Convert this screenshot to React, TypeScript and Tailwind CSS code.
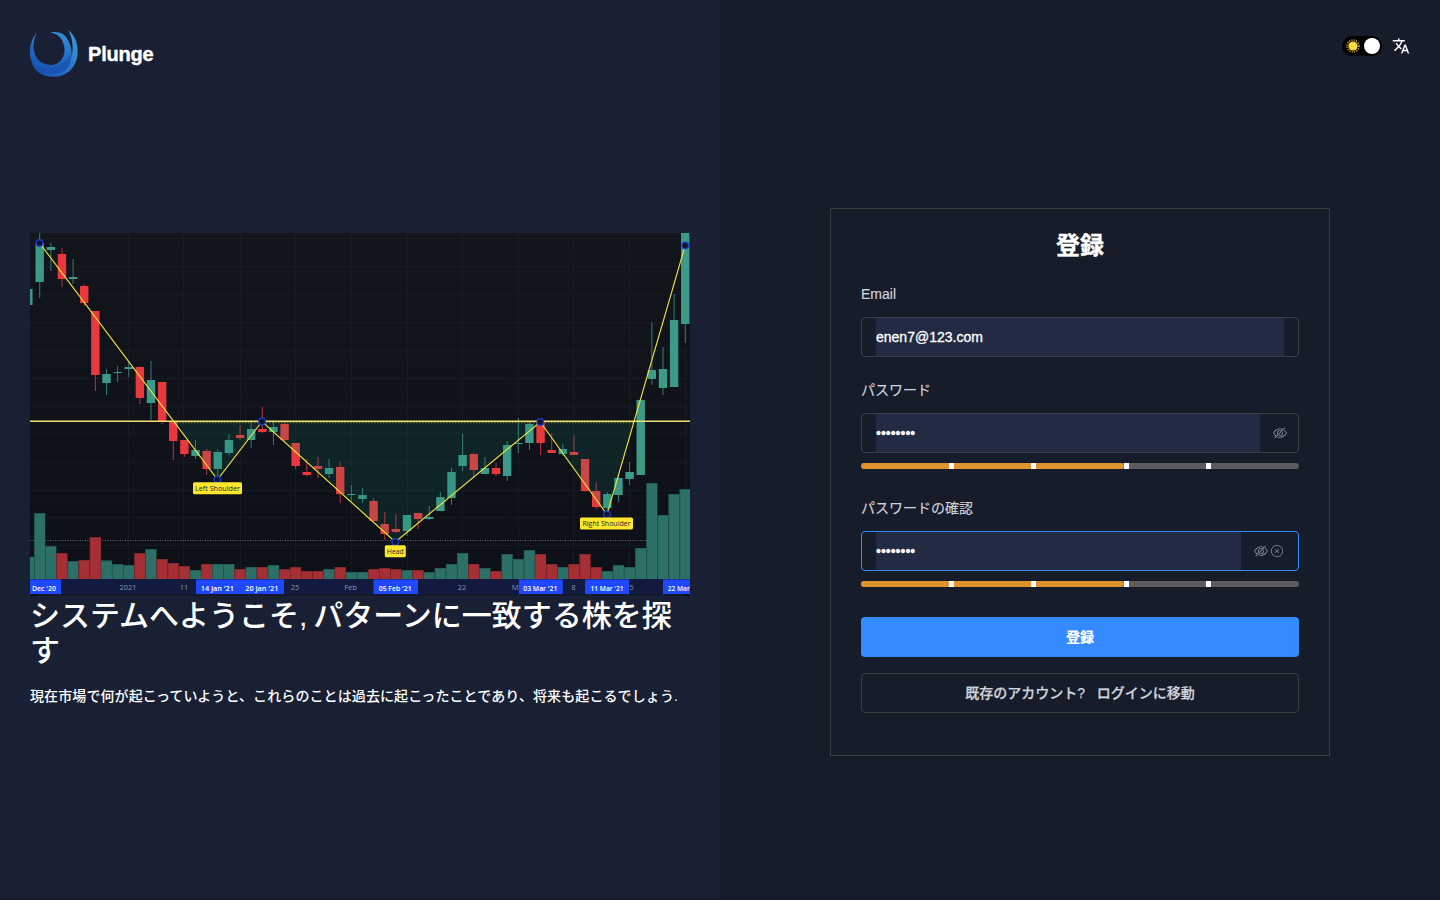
import React from "react";

type Candle = [number, number, number, number, "g" | "r", number];

const STEP = 11.13;
const FIRST_X = 39.7;

// high, open/close top, open/close bottom, low, direction, volume top
const candles: Candle[] = [
  [233, 243, 282, 298, "g", 513],
  [243, 247, 250, 271, "g", 546],
  [248, 254, 279, 287, "r", 553],
  [259, 277, 279, 284, "g", 561],
  [284, 286, 303, 306, "r", 560],
  [311, 311, 375, 391, "r", 537],
  [369, 374, 383, 395, "g", 560.5],
  [366, 372, 373, 382, "g", 564],
  [362, 367, 369, 377, "g", 565],
  [366, 367, 398, 404, "r", 553],
  [361, 380, 403, 420, "g", 549],
  [382, 382, 422, 424, "r", 559],
  [422, 422, 441, 460, "r", 563],
  [440, 440, 454, 457, "r", 566],
  [440, 450, 456, 459, "g", 570],
  [449, 451, 469, 475, "r", 564],
  [449, 452, 469, 478, "g", 564],
  [434, 440, 453, 455, "g", 564],
  [425, 435, 438, 440, "r", 569],
  [422, 429, 440, 448, "g", 567],
  [407, 429, 432, 433, "r", 567],
  [422, 427, 432, 445, "g", 565],
  [421, 424, 440, 441, "r", 569],
  [443, 443, 466, 469, "r", 567],
  [459, 472, 475, 476, "r", 571],
  [457, 466, 469, 478, "r", 571],
  [459, 468, 474, 478, "g", 569],
  [462, 467, 494, 503, "r", 567],
  [485, 494, 495, 501, "g", 572],
  [488, 495, 499, 503, "g", 572],
  [498, 501, 521, 522, "r", 569],
  [512, 524, 534, 540, "r", 568],
  [514, 529, 532, 533, "r", 569],
  [515, 515, 531, 536, "g", 570],
  [513, 513, 519, 529, "r", 570],
  [506, 517, 519, 520, "g", 572],
  [492, 497, 511, 511, "g", 568],
  [468, 472, 498, 505, "g", 564],
  [434, 455, 466, 471, "g", 553],
  [453, 454, 470, 478, "r", 564],
  [457, 468, 474, 474, "g", 568],
  [463, 468, 474, 476, "r", 571],
  [441, 445, 476, 481, "g", 554],
  [418, 443, 444, 453, "g", 559],
  [422, 424, 443, 450, "g", 550],
  [422, 422, 443, 455, "r", 554],
  [433, 450, 453, 453, "r", 564],
  [444, 449, 454, 456, "g", 567],
  [435, 452, 455, 455, "r", 564],
  [459, 459, 491, 492, "r", 554],
  [482, 491, 507, 509, "r", 567],
  [492, 494, 508, 512, "g", 571],
  [476, 478, 495, 502, "g", 565],
  [462, 472, 479, 485, "g", 567],
  [400, 400, 475, 475, "g", 548],
  [322, 370, 379, 385, "g", 483],
  [347, 369, 388, 395, "g", 515],
  [294, 320, 387, 387, "g", 494],
  [233, 233, 324, 343, "g", 489],
];

const pattern: [number, number][] = [
  [39.5, 243],
  [217.5, 479.5],
  [262, 421.5],
  [395.3, 542],
  [540.3, 422],
  [607, 514.5],
  [685.2, 245.5],
];

const axisLabels: [number, string][] = [
  [128, "2021"],
  [184, "11"],
  [295, "25"],
  [350.5, "Feb"],
  [462, "22"],
  [515, "M"],
  [573.5, "8"],
  [631.3, "5"],
];

const dateTags: [number, number, number, string, number][] = [
  [28, 33, 44, "Dec '20", 24],
  [196, 44, 217.3, "14 Jan '21", 33],
  [240, 44, 261.8, "20 Jan '21", 33],
  [373.5, 44.5, 395.2, "05 Feb '21", 33],
  [518.8, 44, 540.3, "03 Mar '21", 34],
  [585, 44, 607, "11 Mar '21", 33],
  [663, 44, 678.8, "22 Mar", 22],
];

const pointTags: [number, number, number, number, string, number][] = [
  [193, 482.3, 49, 12, "Left Shoulder", 45],
  [384.8, 545.2, 21, 12, "Head", 17],
  [580, 517.5, 53, 12, "Right Shoulder", 48],
];

function PatternChart() {
  return (
    <svg viewBox="30 233 660 363" className="block h-[363px] w-[660px] shrink-0">
      <defs>
        <linearGradient id="chartBg" x1="0" y1="0" x2="0" y2="1">
          <stop offset="0" stopColor="#12151c" />
          <stop offset="1" stopColor="#0e1018" />
        </linearGradient>
      </defs>
      <rect x="30" y="233" width="660" height="346" fill="url(#chartBg)" />
      <g stroke="#1b1f27" strokeWidth="1">
        {[238.5, 266.5, 294.5, 322.5, 350.5, 378.5, 406.5, 433.5, 462.5, 490.5, 517.5, 545.5].map((y) => (
          <path key={y} d={`M30 ${y}H690`} opacity="0.6" />
        ))}
        {[128.5, 183.5, 240.5, 295.5, 351.5, 407.5, 462.5, 518.5, 573.5, 629.5, 685.5].map((x) => (
          <path key={x} d={`M${x} 233V579`} opacity="0.6" />
        ))}
      </g>
      <path d="M30 540.5H690" stroke="#62656b" strokeWidth="1" strokeDasharray="1 1.5" />
      <rect x="30" y="557" width="4" height="22" fill="#2c7067" />
      {candles.map(([, , , , dir, vol], i) => {
        const x = FIRST_X + i * STEP;
        return (
          <g key={i}>
            <rect x={x - 5.5} y={vol} width="11" height={579 - vol} fill={dir === "g" ? "#2c7067" : "#a62f35"} />
            <path
              d={`M${x - 5.5} ${vol + 0.5}h11M${x - 5.3} ${vol}V579`}
              stroke={dir === "g" ? "#1d4f4b" : "#742429"}
              strokeWidth="0.6"
            />
          </g>
        );
      })}
      <rect x="28" y="289" width="4.5" height="16" fill="#3d9988" />
      {candles.map(([hi, top, bottom, lo, dir], i) => {
        const x = FIRST_X + i * STEP;
        const color = dir === "g" ? "#3d9988" : "#e9393f";
        return (
          <g key={i} fill={color}>
            <rect x={x - 0.5} y={hi} width="1" height={lo - hi} opacity="0.8" />
            <rect x={x - 4.2} y={top} width="8.4" height={bottom - top} />
          </g>
        );
      })}
      <path
        d="M173 421.5L217.5 479.5L262 421.5L395.3 542L540.3 422L607 514.5L634 421.5Z"
        fill="#168a70"
        opacity="0.15"
      />
      <path d="M30 421.3H690" stroke="#efe070" strokeWidth="1.4" />
      <path d="M173 422.7H634" stroke="#a9a635" strokeWidth="0.8" strokeDasharray="1.5 1.5" />
      <polyline
        points={pattern.map((p) => p.join(",")).join(" ")}
        fill="none"
        stroke="#efe23c"
        strokeWidth="1.15"
      />
      {pattern.map(([x, y]) => (
        <circle key={x} cx={x} cy={y} r="3.3" fill="#11162a" stroke="#1b3fd4" strokeWidth="1.2" />
      ))}
      <g fontFamily='"Open Sans", "Noto Sans", sans-serif' fontSize="7.5">
        {pointTags.map(([x, y, w, h, label, len]) => (
          <g key={label}>
            <rect x={x} y={y} width={w} height={h} rx="1.5" fill="#fde72d" />
            <text x={x + w / 2} y={y + 8.6} textAnchor="middle" textLength={len} lengthAdjust="spacingAndGlyphs" fill="#1f2430">
              {label}
            </text>
          </g>
        ))}
      </g>
      <rect x="30" y="579" width="660" height="15" fill="#121a40" />
      <rect x="30" y="594" width="660" height="2" fill="#151a31" />
      <rect x="30" y="594" width="8" height="2" fill="#0e1018" />
      <rect x="684" y="594" width="6" height="2" fill="#0e1018" />
      <g fontFamily='"Open Sans", "Noto Sans", sans-serif' fontSize="7.5" textAnchor="middle">
        {axisLabels.map(([x, label]) => (
          <text key={label} x={x} y="590" fill="#8d93a6">
            {label}
          </text>
        ))}
        {dateTags.map(([x, w, cx, label, len]) => (
          <g key={label}>
            <rect x={x} y="579.5" width={w} height="14.5" fill="#1f48fb" />
            <text x={cx} y="590.7" fill="#fff" fontWeight="600" textLength={len} lengthAdjust="spacingAndGlyphs">
              {label}
            </text>
          </g>
        ))}
      </g>
    </svg>
  );
}

function Logo() {
  return (
    <svg viewBox="0 0 48 48" className="size-12 shrink-0">
      <defs>
        <linearGradient id="ringA" x1="0.1" y1="0.9" x2="0.9" y2="0.1">
          <stop offset="0" stopColor="#1450ae" />
          <stop offset="0.5" stopColor="#2a78c8" />
          <stop offset="1" stopColor="#3a98da" />
        </linearGradient>
        <linearGradient id="ringB" x1="0.3" y1="1" x2="0.7" y2="0">
          <stop offset="0" stopColor="#1552b6" />
          <stop offset="0.45" stopColor="#2168c0" />
          <stop offset="1" stopColor="#3290d4" />
        </linearGradient>
      </defs>
      <path
        d="M38 1C45 6 48 15 47.600 24C47 38 37 47.800 24 47.800C12 47.800 5 43 1.500 33C14 43 32 42 39 32C45 24 43 9 38 1Z"
        fill="url(#ringA)"
      />
      <path
        d="M6.500 4C-1 12 -2 27 3 35C10 46 30 48 38 38C45 28 41 12 34 6C30 3 25 2.500 20.500 3.500C29 4.500 34.500 12 34.500 21C34.500 30 28 36 21 36C10 36 3.500 27 3.500 18C3.500 12 5 8 6.500 4Z"
        fill="url(#ringB)"
      />
      <path d="M3 34C13 43 31 40 41 25C42 31 40 37 36 41C26 48 9 45 3 34Z" fill="#1750b2" opacity="0.6" />
    </svg>
  );
}

function HideIcon() {
  return (
    <svg viewBox="0 0 1024 1024" className="size-3.5" fill="currentColor">
      <path d="M876.8 156.8c0-9.6-3.2-16-9.6-22.4-6.4-6.4-12.8-9.6-22.4-9.6-9.6 0-16 3.2-22.4 9.6L736 220.8c-64-32-137.6-51.2-224-60.8-160 16-288 73.6-377.6 176C44.8 438.4 0 496 0 512s48 73.6 134.4 176c22.4 25.6 44.8 48 73.6 67.2l-86.4 89.6c-6.4 6.4-9.6 12.8-9.6 22.4 0 9.6 3.2 16 9.6 22.4 6.4 6.4 12.8 9.6 22.4 9.6 9.6 0 16-3.2 22.4-9.6l704-710.4c3.2-6.4 6.4-12.8 6.4-22.4Zm-646.4 528c-76.8-70.4-128-128-153.6-172.8 28.8-48 80-105.6 153.6-172.8C304 272 400 230.4 512 224c64 3.2 124.8 19.2 176 44.8l-54.4 54.4C598.4 300.8 560 288 512 288c-64 0-115.2 22.4-160 64s-64 96-64 160c0 48 12.8 89.6 35.2 124.8L256 707.2c-9.6-6.4-19.2-16-25.6-22.4Zm140.8-96c-12.8-22.4-19.2-48-19.2-76.8 0-44.8 16-83.2 48-112 32-28.8 67.2-48 112-48 28.8 0 54.4 6.4 73.6 19.2L371.2 588.8ZM889.599 336c-12.8-16-28.8-28.8-41.6-41.6l-48 48c73.6 67.2 124.8 124.8 150.4 169.6-28.8 48-80 105.6-153.6 172.8-73.6 67.2-172.8 108.8-284.8 115.2-51.2-3.2-99.2-12.8-140.8-28.8l-48 48c57.6 22.4 118.4 38.4 188.8 44.8 160-16 288-73.6 377.6-176C979.199 585.6 1024 528 1024 512s-48.001-73.6-134.401-176Z" />
      <path d="M511.998 672c-12.8 0-25.6-3.2-38.4-6.4l-51.2 51.2c28.8 12.8 57.6 19.2 89.6 19.2 64 0 115.2-22.4 160-64 41.6-41.6 64-96 64-160 0-32-6.4-64-19.2-89.6l-51.2 51.2c3.2 12.8 6.4 25.6 6.4 38.4 0 44.8-16 83.2-48 112-32 28.8-67.2 48-112 48Z" />
    </svg>
  );
}

function CircleCloseIcon() {
  return (
    <svg viewBox="0 0 1024 1024" className="size-3.5" fill="currentColor">
      <path d="m466.752 512-90.496-90.496a32 32 0 0 1 45.248-45.248L512 466.752l90.496-90.496a32 32 0 0 1 45.248 45.248L557.248 512l90.496 90.496a32 32 0 1 1-45.248 45.248L512 557.248l-90.496 90.496a32 32 0 0 1-45.248-45.248L466.752 512z" />
      <path d="M512 896a384 384 0 1 0 0-768 384 384 0 0 0 0 768zm0 64a448 448 0 1 1 0-896 448 448 0 0 1 0 896z" />
    </svg>
  );
}

function ThemeToggle() {
  return (
    <div className="flex h-5 w-10 items-center justify-between rounded-full bg-black pr-0.5 pl-1">
      <svg viewBox="0 0 14 14" className="size-3.5">
        <circle cx="7" cy="7" r="4.6" fill="#fcd93a" />
        <circle cx="7" cy="7" r="6" fill="none" stroke="#d9b636" strokeWidth="1.5" strokeDasharray="1.1 1.256" />
      </svg>
      <span className="size-4 rounded-full bg-white" />
    </div>
  );
}

function TranslateIcon() {
  return (
    <svg viewBox="0 0 24 24" className="size-[18px]" fill="#fff">
      <path d="M12.87 15.07l-2.54-2.51.03-.03c1.74-1.94 2.98-4.17 3.71-6.53H17V4h-7V2H8v2H1v1.99h11.17C11.5 7.92 10.44 9.75 9 11.35 8.07 10.32 7.3 9.19 6.69 8h-2c.73 1.63 1.73 3.17 2.98 4.56l-5.09 5.02L4 19l5-5 3.11 3.11.76-2.04zM18.5 10h-2L12 22h2l1.12-3h4.75L21 22h2l-4.5-12zm-2.62 7l1.62-4.33L19.12 17h-3.24z" />
    </svg>
  );
}

function StrengthBar() {
  return (
    <div className="mt-2.5 flex h-1.5 overflow-hidden rounded-full bg-[#5c5c5e]">
      <span className="w-[88px] bg-[#e0922e]" />
      <span className="w-[5px] bg-white" />
      <span className="w-[77px] bg-[#e0922e]" />
      <span className="w-[5px] bg-white" />
      <span className="w-[88px] rounded-r-full bg-[#e0922e]" />
      <span className="w-[5px] bg-white" />
      <span className="w-[77px]" />
      <span className="w-[5px] bg-white" />
    </div>
  );
}

const fieldFrame = {
  plain: "mt-3 flex h-10 items-stretch rounded border border-[#3e3f41] px-3.5",
  suffix: "mt-3 flex h-10 items-stretch rounded border border-[#3e3f41] pr-[11px] pl-3.5",
  focused: "mt-3 flex h-10 items-stretch rounded border border-[#368aff] px-3.5",
};

function Field({
  value,
  frame,
  children,
}: {
  value: string;
  frame: keyof typeof fieldFrame;
  children?: React.ReactNode;
}) {
  return (
    <div className={fieldFrame[frame]}>
      <div className="flex flex-1 items-center bg-[#232a43] text-sm text-white [-webkit-text-stroke:0.3px_#fff]">
        {value}
      </div>
      {children && <div className="flex items-center gap-0.5 pl-[13px] text-[#83868e]">{children}</div>}
    </div>
  );
}

export default function App() {
  return (
    <div
      className="flex h-[900px] w-[1440px] flex-col overflow-hidden bg-[#1b1629] font-['Liberation_Sans','Noto_Sans_CJK_JP',sans-serif]"
      lang="ja"
    >
      <div className="flex h-[898px]">
        <section className="flex w-[720px] flex-col bg-[#1a2033] px-[30px] pt-[29px] text-white">
          <div className="flex h-12 items-center gap-2.5">
            <Logo />
            <span className="pt-0.5 text-xl font-bold tracking-[-0.2px] [-webkit-text-stroke:0.4px_#fff]">Plunge</span>
          </div>
          <div className="mt-[156px] flex flex-col">
            <PatternChart />
            <h1 className="mt-0.5 text-[30px] leading-[35px] font-medium">
              システムへようこそ<span className="tracking-[-1.3px]">, </span>パターンに一致する株を探す
            </h1>
            <p className="mt-[17px] text-sm leading-[22px] font-medium tracking-[0.1px] whitespace-nowrap">
              現在市場で何が起こっていようと、これらのことは過去に起こったことであり、将来も起こるでしょう.
            </p>
          </div>
        </section>
        <section className="flex w-[720px] flex-col items-center bg-[#171c2b]">
          <header className="flex h-[92px] w-full items-center justify-end gap-2.5 pr-[30px]">
            <ThemeToggle />
            <TranslateIcon />
          </header>
          <div className="mt-[116px] flex h-[548px] w-[500px] flex-col border border-[#3e3f41] px-[30px] pt-[21px]">
            <h2 className="text-center text-2xl leading-8 font-bold text-white [-webkit-text-stroke:0.4px_#fff]">登録</h2>
            <label className="mt-[21px] text-sm leading-[22px] text-[#cfd3dc] [-webkit-text-stroke:0.15px_#cfd3dc]">
              Email
            </label>
            <Field value="enen7@123.com" frame="plain" />
            <label className="mt-[22px] text-sm leading-[22px] text-[#cfd3dc] [-webkit-text-stroke:0.15px_#cfd3dc]">
              パスワード
            </label>
            <Field value="••••••••" frame="suffix">
              <HideIcon />
            </Field>
            <StrengthBar />
            <label className="mt-7 text-sm leading-[22px] text-[#cfd3dc] [-webkit-text-stroke:0.15px_#cfd3dc]">
              パスワードの確認
            </label>
            <Field value="••••••••" frame="focused">
              <HideIcon />
              <CircleCloseIcon />
            </Field>
            <StrengthBar />
            <button className="mt-[30px] h-10 rounded bg-[#368aff] text-sm font-bold text-white [-webkit-text-stroke:0.2px_#fff]">
              登録
            </button>
            <button className="mt-4 h-10 rounded border border-[#3e3f41] text-sm font-medium whitespace-pre text-[#cfd3dc] [-webkit-text-stroke:0.25px_#cfd3dc]">
              {"既存のアカウント?   ログインに移動"}
            </button>
          </div>
        </section>
      </div>
    </div>
  );
}
